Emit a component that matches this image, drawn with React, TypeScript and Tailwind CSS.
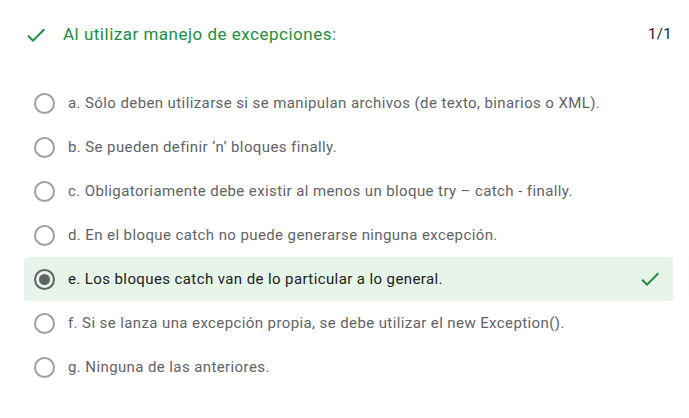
import React from "react";

const options = [
  "a. Sólo deben utilizarse si se manipulan archivos (de texto, binarios o XML).",
  "b. Se pueden definir ‘n’ bloques finally.",
  "c. Obligatoriamente debe existir al menos un bloque try – catch - finally.",
  "d. En el bloque catch no puede generarse ninguna excepción.",
  "e. Los bloques catch van de lo particular a lo general.",
  "f. Si se lanza una excepción propia, se debe utilizar el new Exception().",
  "g. Ninguna de las anteriores.",
];

const SELECTED = 4;

function Check({ className }: { className?: string }) {
  return (
    <svg viewBox="0 0 24 24" className={className} fill="currentColor">
      <path d="M9 16.17L4.83 12l-1.42 1.41L9 19 21 7l-1.41-1.41z" />
    </svg>
  );
}

export default function App() {
  return (
    <div className="w-[689px] h-[418px] bg-white font-['Roboto',sans-serif]">
      {/* cabecera de la pregunta */}
      <div className="flex items-center pt-[21px] pl-[24px] pr-[17px] h-[48px]">
        <Check className="w-[24px] h-[24px] text-[#1e8e3e]" />
        <span className="ml-[15px] text-[17px] text-[#1e8e3e] tracking-[0.5px]">Al utilizar manejo de excepciones:</span>
        <span className="ml-auto text-[15px] tracking-[0.3px] text-[#202124]">1/1</span>
      </div>

      {/* opciones */}
      <div className="mt-[33px] ml-[24px] mr-[16px]">
        {options.map((opt, i) => {
          const sel = i === SELECTED;
          return (
            <div
              key={i}
              className={`flex items-center h-[44px] pl-[10px] pr-[11px] rounded-[4px] ${sel ? "bg-[#e6f4ea]" : ""}`}
            >
              <div
                className={`w-[21px] h-[21px] rounded-full border-2 flex items-center justify-center shrink-0 ${sel ? "border-[#5f6368]" : "border-[#9aa0a6]"}`}
              >
                {sel && <div className="w-[11px] h-[11px] rounded-full bg-[#5f6368]" />}
              </div>
              <span className={`ml-[13px] text-[15px] tracking-[0.4px] ${sel ? "text-[#202124]" : "text-[#5f6368]"}`}>{opt}</span>
              {sel && <Check className="ml-auto w-[24px] h-[24px] text-[#1e8e3e]" />}
            </div>
          );
        })}
      </div>
    </div>
  );
}
